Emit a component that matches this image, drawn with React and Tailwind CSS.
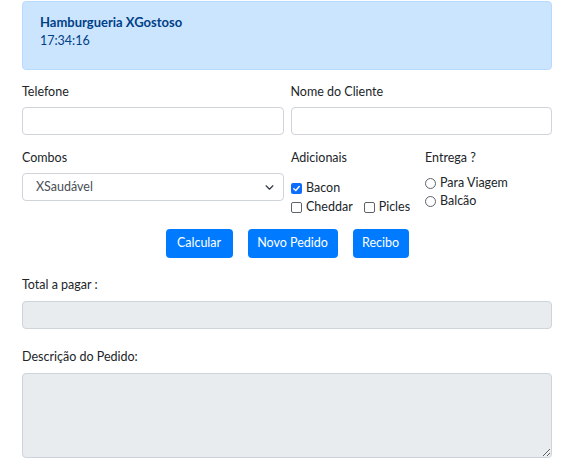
import React from 'react';

const Check = ({ checked, label }) => (
    <label className="flex items-center gap-[4px] h-[19px]">
        {checked ? (
            <span className="w-[11px] h-[11px] rounded-[2px] bg-[#0d6efd] flex items-center justify-center">
                <svg width="9" height="9" viewBox="0 0 10 10">
                    <path d="M2 5.2 L4.2 7.3 L8 2.8" fill="none" stroke="white" strokeWidth="1.6" strokeLinecap="round" strokeLinejoin="round" />
                </svg>
            </span>
        ) : (
            <span className="w-[11px] h-[11px] rounded-[2px] border border-[#5c636a] bg-white"></span>
        )}
        <span>{label}</span>
    </label>
);

const Radio = ({ label }) => (
    <label className="flex items-center gap-[4px] h-[18px]">
        <span className="w-[11px] h-[11px] rounded-full border border-[#5c636a] bg-white"></span>
        <span>{label}</span>
    </label>
);

const App = () => {
    return (
        <div className="min-h-screen bg-white font-['Lato',sans-serif] text-[12.5px] text-[#212529]">
            <div className="ml-[22px] w-[530px]">
                {/* Header alert */}
                <div className="h-[69px] mt-[1px] bg-[#cce5ff] border border-[#b8daff] rounded-[4px] pl-[17px] pt-[11px] text-[#004085]">
                    <div className="font-bold text-[13px] leading-[18px]">Hamburgueria XGostoso</div>
                    <div className="leading-[18px] mt-[1px]">17:34:16</div>
                </div>

                {/* Telefone / Nome */}
                <div className="grid grid-cols-2 gap-x-[7px] mt-[13px]">
                    <div>
                        <div className="h-[18px] leading-[18px]">Telefone</div>
                        <div className="mt-[6px] h-[28px] border border-[#ced4da] rounded-[4px] bg-white"></div>
                    </div>
                    <div>
                        <div className="h-[18px] leading-[18px]">Nome do Cliente</div>
                        <div className="mt-[6px] h-[28px] border border-[#ced4da] rounded-[4px] bg-white"></div>
                    </div>
                </div>

                {/* Combos / Adicionais / Entrega */}
                <div className="flex mt-[14px] h-[68px]">
                    <div className="w-[262px] mr-[7px]">
                        <div className="h-[18px] leading-[18px]">Combos</div>
                        <div className="mt-[6px] h-[28px] border border-[#ced4da] rounded-[4px] bg-white flex items-center justify-between pl-[13px] pr-[9px] text-[#495057]">
                            <span>XSaudável</span>
                            <svg width="9" height="9" viewBox="0 0 16 16">
                                <path d="M2 5 L8 11 L14 5" fill="none" stroke="#343a40" strokeWidth="2.2" strokeLinecap="round" strokeLinejoin="round" />
                            </svg>
                        </div>
                    </div>
                    <div className="w-[134px]">
                        <div className="h-[18px] leading-[18px]">Adicionais</div>
                        <div className="mt-[12px]">
                            <Check checked label="Bacon" />
                            <div className="flex gap-[11px]">
                                <Check label="Cheddar" />
                                <Check label="Picles" />
                            </div>
                        </div>
                    </div>
                    <div className="flex-1">
                        <div className="h-[18px] leading-[18px]">Entrega ?</div>
                        <div className="mt-[7px]">
                            <Radio label="Para Viagem" />
                            <Radio label="Balcão" />
                        </div>
                    </div>
                </div>

                {/* Buttons */}
                <div className="flex justify-center gap-[15px] mt-[12px]">
                    <button className="h-[29px] w-[67px] bg-[#007bff] text-white rounded-[4px] leading-none">Calcular</button>
                    <button className="h-[29px] w-[90px] bg-[#007bff] text-white rounded-[4px] leading-none">Novo Pedido</button>
                    <button className="h-[29px] w-[56px] bg-[#007bff] text-white rounded-[4px] leading-none">Recibo</button>
                </div>

                {/* Total */}
                <div className="mt-[18px]">
                    <div className="h-[18px] leading-[18px]">Total a pagar :</div>
                    <div className="mt-[7px] h-[28px] border border-[#ced4da] rounded-[4px] bg-[#e9ecef]"></div>
                </div>

                {/* Descrição */}
                <div className="mt-[19px]">
                    <div className="h-[18px] leading-[18px]">Descrição do Pedido:</div>
                    <textarea
                        readOnly
                        className="block mt-[7px] w-full h-[85px] border border-[#ced4da] rounded-[4px] bg-[#e9ecef] outline-none"
                    ></textarea>
                </div>
            </div>
        </div>
    );
};

export default App;
